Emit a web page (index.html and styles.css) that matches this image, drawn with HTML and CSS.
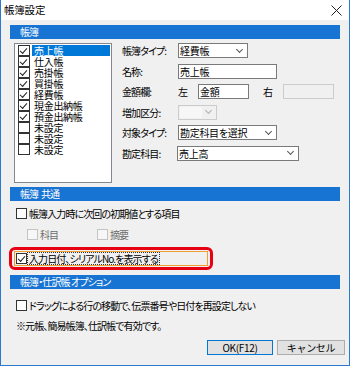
FILE: index.html
```html
<!DOCTYPE html>
<html>
<head>
<meta charset="UTF-8">
<title>帳簿設定</title>
<link rel="stylesheet" href="styles.css">
</head>
<body>
<div class="window">
	<div class="titlebar">
		<span class="title">帳簿設定</span>
		<svg class="close" width="11" height="11" viewBox="0 0 11 11"><path d="M0.5 0.5 L10.5 10.5 M10.5 0.5 L0.5 10.5" stroke="#222" stroke-width="1"/></svg>
	</div>
	<div class="content">
		<div class="section-head">帳簿</div>

		<div class="ledger">
			<div class="listbox">
				<div class="item selected"><span class="cb checked"></span><span class="label">売上帳</span></div>
				<div class="item"><span class="cb checked"></span><span class="label">仕入帳</span></div>
				<div class="item"><span class="cb checked"></span><span class="label">売掛帳</span></div>
				<div class="item"><span class="cb checked"></span><span class="label">買掛帳</span></div>
				<div class="item"><span class="cb checked"></span><span class="label">経費帳</span></div>
				<div class="item"><span class="cb checked"></span><span class="label">現金出納帳</span></div>
				<div class="item"><span class="cb checked"></span><span class="label">預金出納帳</span></div>
				<div class="item"><span class="cb"></span><span class="label">未設定</span></div>
				<div class="item"><span class="cb"></span><span class="label">未設定</span></div>
				<div class="item"><span class="cb"></span><span class="label">未設定</span></div>
			</div>

			<div class="form">
				<span class="flabel">帳簿タイプ:</span>
				<div class="select w70"><span>経費帳</span><i class="chev"></i></div>

				<span class="flabel">名称:</span>
				<div class="input w99">売上帳</div>

				<span class="flabel">金額欄:</span>
				<div class="amount">
					<span class="side">左</span>
					<div class="input w51">金額</div>
					<span class="side right">右</span>
					<div class="input w51 disabled"></div>
				</div>

				<span class="flabel">増加区分:</span>
				<div class="select w39 disabled"><span></span><i class="chev"></i></div>

				<span class="flabel">対象タイプ:</span>
				<div class="select w99"><span>勘定科目を選択</span><i class="chev"></i></div>

				<span class="flabel">勘定科目:</span>
				<div class="select w122"><span>売上高</span><i class="chev"></i></div>
			</div>
		</div>

		<div class="section-head">帳簿&nbsp; 共通</div>

		<div class="row row-a"><span class="cb"></span><span>帳簿入力時に次回の初期値とする項目</span></div>
		<div class="row row-b">
			<span class="sub"><span class="cb disabled"></span><span class="muted">科目</span></span>
			<span class="sub"><span class="cb disabled"></span><span class="muted">摘要</span></span>
		</div>

		<div class="highlight">
			<div class="focus-row"><span class="cb checked"></span><span class="dotted">入力日付、シリアルNo.を表示する</span></div>
		</div>

		<div class="section-head">帳簿・仕訳帳 オプション</div>

		<div class="row row-c"><span class="cb"></span><span>ドラッグによる行の移動で、伝票番号や日付を再設定しない</span></div>
		<div class="row note">※元帳、簡易帳簿、仕訳帳で有効です。</div>

		<div class="buttons">
			<button class="btn default">OK(F12)</button>
			<button class="btn">キャンセル</button>
		</div>
	</div>
</div>
</body>
</html>
```

FILE: styles.css
```css
body {
	margin: 0;
	font-family: "Noto Sans CJK JP", "Liberation Sans", sans-serif;
	font-size: 10px;
	font-feature-settings: "palt";
	letter-spacing: -0.9px;
	color: #000;
}
.window {
	width: 350px;
	height: 366px;
	box-sizing: border-box;
	border: 1px solid #2b79d0;
	border-top: none;
	background-color: #f0f0f0;
}
.titlebar {
	height: 20px;
	background-color: #ffffff;
	display: flex;
	align-items: center;
	justify-content: space-between;
	padding: 0 7px 0 3px;
}
.title {
	font-size: 10.5px;
	line-height: 20px;
	letter-spacing: -0.2px;
}
.content {
	padding: 5px 9px 0 9px;
}
.section-head {
	height: 14px;
	line-height: 14px;
	background-color: #1874d2;
	color: #ffffff;
	padding-left: 10px;
}

/* 帳簿 */
.ledger {
	display: flex;
	margin-top: 4px;
	margin-bottom: 4px;
	padding-left: 4px;
}
.listbox {
	width: 98px;
	height: 140px;
	box-sizing: border-box;
	border: 1px solid #828790;
	background-color: #ffffff;
	padding: 1px 0 0 3px;
	letter-spacing: -0.3px;
}
.item {
	height: 11px;
	display: flex;
	align-items: center;
	line-height: 11px;
}
.item .cb {
	width: 10px;
	margin-right: 2px;
}
.item .label {
	padding: 0 2px;
	flex: 1;
	margin-right: 1px;
}
.item.selected .label {
	background-color: #0078d7;
	color: #ffffff;
	height: 11px;
}

.cb {
	display: inline-block;
	width: 9px;
	height: 9px;
	border: 1px solid #333333;
	background-color: #ffffff;
	flex: none;
	position: relative;
}
.cb.checked::after {
	content: "";
	position: absolute;
	left: 1px;
	top: 0px;
	width: 6px;
	height: 3px;
	border-left: 1px solid #222;
	border-bottom: 1px solid #222;
	transform: translate(0, 2px) rotate(-48deg);
	transform-origin: center;
}
.cb.disabled {
	border-color: #c4c4c4;
	background-color: #f7f7f7;
}

.form {
	margin-left: 10px;
	display: grid;
	grid-template-columns: 56px auto;
	grid-auto-rows: 15px;
	row-gap: 5.6px;
	align-items: center;
}
.flabel {
	line-height: 15px;
}
.input, .select {
	height: 15px;
	box-sizing: border-box;
	border: 1px solid #7a7a7a;
	background-color: #ffffff;
	line-height: 13px;
	padding-left: 1px;
	white-space: nowrap;
	letter-spacing: -0.3px;
}
.select {
	display: flex;
	justify-content: space-between;
	align-items: center;
	padding-right: 5px;
}
.chev {
	width: 4px;
	height: 4px;
	border-right: 1px solid #555;
	border-bottom: 1px solid #555;
	transform: rotate(45deg);
	margin-top: -3px;
}
.select.disabled, .input.disabled {
	border-color: #cccccc;
	background-color: #f0f0f0;
}
.select.disabled span {
	background-color: #f7f7f7;
	flex: 1;
	height: 11px;
	margin-right: 4px;
}
.select.disabled .chev {
	border-color: #b0b0b0;
}
.w39 { width: 39px; }
.w51 { width: 51px; }
.w70 { width: 70px; }
.w99 { width: 99px; }
.w122 { width: 122px; margin-left: -1px; }
.amount {
	display: flex;
	align-items: center;
}
.side {
	width: 20px;
}
.side.right {
	margin-left: 14px;
}

/* 共通 */
.row {
	display: flex;
	align-items: center;
	height: 13px;
	padding-left: 6px;
}
.row .cb {
	margin-right: 2px;
}
.row-a {
	margin-top: 6px;
}
.row-b {
	margin-top: 8px;
	padding-left: 17px;
}
.sub {
	display: flex;
	align-items: center;
	width: 70px;
}
.muted {
	color: #6d6d6d;
}
.highlight {
	margin: 6px 0 0 -1px;
	width: 204px;
	height: 23px;
	box-sizing: border-box;
	border: 3px solid #e60012;
	border-radius: 6px;
	padding: 1px 2px;
}
.focus-row {
	height: 15px;
	box-sizing: border-box;
	border: 1px solid #f0a030;
	display: flex;
	align-items: center;
	padding-left: 1px;
}
.focus-row .cb {
	margin-right: 1px;
}
.dotted {
	outline: 1px dotted #333;
	line-height: 11px;
	padding: 0 1px;
}
.highlight + .section-head {
	margin-top: 5px;
}
.row-c {
	margin-top: 10px;
}
.note {
	margin-top: 7px;
}
.buttons {
	display: flex;
	justify-content: flex-end;
	gap: 4px;
	margin: 8px -5px 0 0;
}
.btn {
	height: 15px;
	box-sizing: border-box;
	border: 1px solid #adadad;
	background-color: #e1e1e1;
	font-family: inherit;
	font-size: 10px;
	letter-spacing: -0.3px;
	line-height: 11px;
	padding: 0;
	width: 68px;
	color: #000;
}
.btn.default {
	width: 66px;
	border-color: #0078d7;
}
```
